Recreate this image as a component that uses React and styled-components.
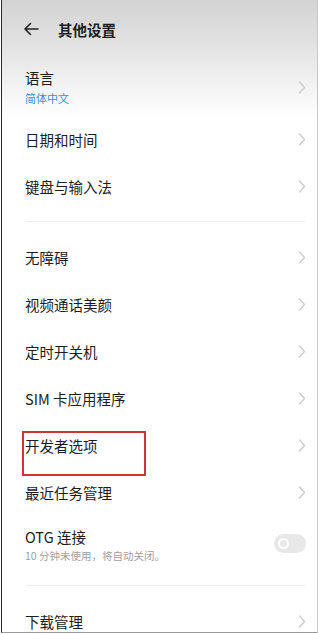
import styled, { createGlobalStyle } from 'styled-components';

const GlobalStyle = createGlobalStyle`
  body {
    margin: 0;
    background: #fff;
    font-family: "Noto Sans CJK SC", "Noto Sans", sans-serif;
  }
`;

const Screen = styled.div`
  position: relative;
  width: 315px;
  height: 632px;
  margin-left: 1px;
  overflow: hidden;
  border-left: 1px solid #2a2a2a;
  border-right: 1px solid #c8c8c8;
  border-bottom: 1px solid #9a9a9a;
  background: linear-gradient(#d3d3d3 0px, #e2e2e2 45px, #f8f8f8 100px, #fff 118px);
  color: #222;
`;

const Header = styled.div`
  display: flex;
  align-items: center;
  height: 58px;
  padding-left: 21px;
  gap: 19px;
`;

const Title = styled.div`
  font-size: 14.5px;
  font-weight: 700;
  color: #1e1e1e;
`;

const Row = styled.div`
  position: relative;
  display: flex;
  align-items: center;
  justify-content: space-between;
  height: ${p => p.h || 47}px;
  padding: 0 11px 0 23px;
`;

const TextBlock = styled.div`
  display: flex;
  flex-direction: column;
  gap: ${p => p.gap || 2}px;
`;

const Label = styled.div`
  font-size: 14.5px;
  line-height: 20px;
  color: #1c1c1c;
`;

const Sub = styled.div`
  font-size: ${p => p.size || 11}px;
  line-height: 16px;
  color: ${p => p.blue ? '#3b8fd6' : '#a0a0a0'};
`;

const Divider = styled.div`
  height: 1px;
  margin: 11px 12px 12px 24px;
  background: #ececec;
`;

const Toggle = styled.div`
  display: flex;
  align-items: center;
  width: 32px;
  height: 19px;
  margin-top: -4px;
  padding-left: 4px;
  box-sizing: border-box;
  border-radius: 10px;
  background: #e8e8e8;
`;

const Knob = styled.div`
  width: 11px;
  height: 11px;
  box-sizing: border-box;
  border-radius: 50%;
  border: 2.5px solid #fff;
`;

const Highlight = styled.div`
  position: absolute;
  left: 20px;
  top: 9px;
  width: 124px;
  height: 45px;
  box-sizing: border-box;
  border: 2px solid #d2333b;
`;

const BackIcon = () => (
  <svg width="16" height="16" viewBox="0 0 16 16">
    <path d="M15 8H2M7.5 2.5L2 8l5.5 5.5" fill="none" stroke="#222" strokeWidth="1.6" strokeLinecap="round" strokeLinejoin="round" />
  </svg>
);

const Chevron = () => (
  <svg width="8" height="13" viewBox="0 0 8 13">
    <path d="M1.5 1l5 5.5-5 5.5" fill="none" stroke="#cbcbcb" strokeWidth="1.3" strokeLinecap="round" strokeLinejoin="round" />
  </svg>
);

const groupA = ['日期和时间', '键盘与输入法'];
const groupB = ['无障碍', '视频通话美颜', '定时开关机', 'SIM 卡应用程序', '开发者选项', '最近任务管理'];

const App = () => {
  return (
    <>
      <GlobalStyle />
      <Screen>
        <Header>
          <BackIcon />
          <Title>其他设置</Title>
        </Header>

        <Row h={58}>
          <TextBlock>
            <Label>语言</Label>
            <Sub blue>简体中文</Sub>
          </TextBlock>
          <Chevron />
        </Row>
        {groupA.map(t => (
          <Row key={t}>
            <Label>{t}</Label>
            <Chevron />
          </Row>
        ))}

        <Divider />

        {groupB.map(t => (
          <Row key={t}>
            <Label>{t}</Label>
            <Chevron />
            {t === '开发者选项' && <Highlight />}
          </Row>
        ))}
        <Row h={58}>
          <TextBlock gap={1}>
            <Label>OTG 连接</Label>
            <Sub size={10.5}>10 分钟未使用，将自动关闭。</Sub>
          </TextBlock>
          <Toggle>
            <Knob />
          </Toggle>
        </Row>

        <Divider />

        <Row>
          <Label>下载管理</Label>
          <Chevron />
        </Row>
      </Screen>
    </>
  );
};

export default App;
